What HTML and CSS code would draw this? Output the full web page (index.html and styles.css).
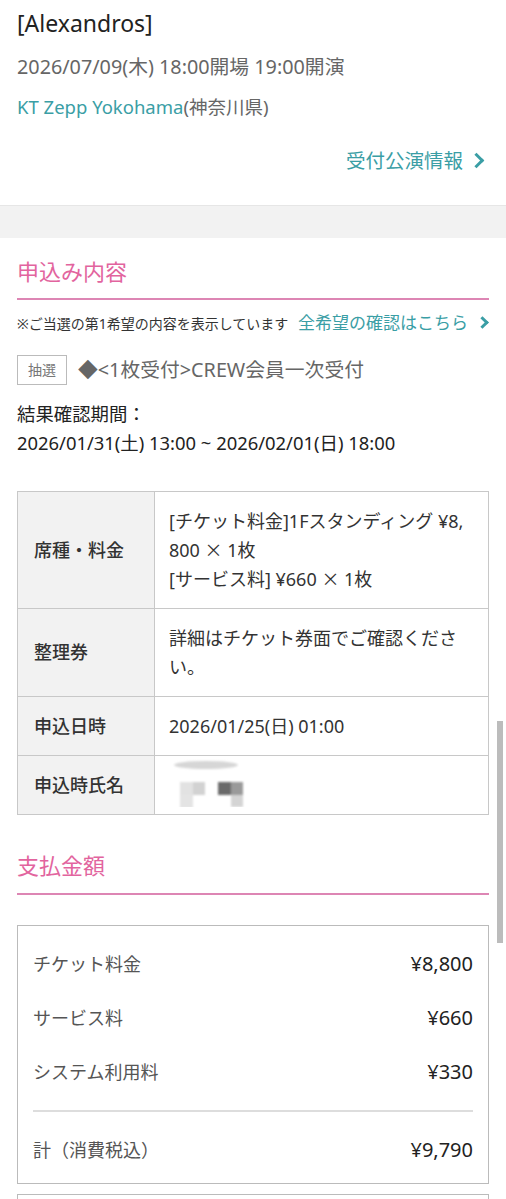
FILE: index.html
```html
<!DOCTYPE html>
<html lang="ja">
<head>
  <meta charset="UTF-8">
  <meta name="viewport" content="width=device-width, initial-scale=1.0">
  <title>申込み内容</title>
  <link rel="stylesheet" href="styles.css">
</head>
<body>
  <div class="event">
    <p class="artist">[Alexandros]</p>
    <p class="date">2026/07/09(木) 18:00開場 19:00開演</p>
    <p class="venue"><a href="#">KT Zepp Yokohama</a>(神奈川県)</p>
    <div class="more"><a href="#" class="link">受付公演情報<span class="chev"></span></a></div>
  </div>

  <div class="band"></div>

  <div class="section">
    <h2 class="heading">申込み内容</h2>
    <p class="note">※ご当選の第1希望の内容を表示しています <a href="#" class="link">全希望の確認はこちら<span class="chev small"></span></a></p>
    <div class="entry">
      <span class="badge">抽選</span>
      <span class="entry-name">◆&lt;1枚受付&gt;CREW会員一次受付</span>
    </div>
    <p class="period">結果確認期間：<br>2026/01/31(土) 13:00 ~ 2026/02/01(日) 18:00</p>

    <table class="detail">
      <tr>
        <th>席種・料金</th>
        <td>[チケット料金]1Fスタンディング ¥8,800 <span class="times">×</span> 1枚<br>[サービス料] ¥660 <span class="times">×</span> 1枚</td>
      </tr>
      <tr>
        <th>整理券</th>
        <td>詳細はチケット券面でご確認ください。</td>
      </tr>
      <tr>
        <th>申込日時</th>
        <td>2026/01/25(日) 01:00</td>
      </tr>
      <tr>
        <th>申込時氏名</th>
        <td>
          <svg class="masked" width="90" height="48" viewBox="0 0 90 48">
            <defs>
              <filter id="soft" x="-20%" y="-20%" width="140%" height="140%">
                <feGaussianBlur stdDeviation="1.2"/>
              </filter>
            </defs>
            <g filter="url(#soft)">
              <ellipse cx="35" cy="6" rx="32" ry="4" fill="#d6d6d6"/>
              <rect x="9" y="23" width="13" height="13" fill="#e2e2e2"/>
              <rect x="22" y="23" width="12" height="13" fill="#d2d2d2"/>
              <rect x="9" y="36" width="13" height="13" fill="#e4e4e4"/>
              <rect x="47" y="23" width="13" height="13" fill="#6a6a6a"/>
              <rect x="60" y="23" width="12" height="13" fill="#9a9a9a"/>
              <rect x="60" y="36" width="12" height="12" fill="#d4d4d4"/>
            </g>
          </svg>
        </td>
      </tr>
    </table>

    <h2 class="heading pay">支払金額</h2>
    <div class="summary">
      <div class="line"><span>チケット料金</span><span class="yen">¥8,800</span></div>
      <div class="line"><span>サービス料</span><span class="yen">¥660</span></div>
      <div class="line"><span>システム利用料</span><span class="yen">¥330</span></div>
      <div class="line total"><span>計（消費税込）</span><span class="yen">¥9,790</span></div>
    </div>
    <div class="summary next"></div>
  </div>

  <div class="scrollbar"></div>
</body>
</html>
```

FILE: styles.css
```css
body {
  margin: 0;
  font-family: "Noto Sans", "Noto Sans CJK JP", sans-serif;
  color: #333;
  background: #fff;
  overflow: hidden;
}
p {
  margin: 0;
}
a {
  text-decoration: none;
}
.link {
  color: #3a9ea5;
}
.chev {
  display: inline-block;
  width: 8px;
  height: 8px;
  border-top: 3px solid #3a9ea5;
  border-right: 3px solid #3a9ea5;
  transform: rotate(45deg);
  margin-left: 8px;
  vertical-align: 2px;
}
.chev.small {
  width: 6px;
  height: 6px;
  margin-left: 10px;
  vertical-align: 2px;
}

/* event summary */
.event {
  padding: 6px 17px 29px;
}
.artist {
  font-size: 23px;
  line-height: 34px;
  color: #222;
}
.date {
  margin-top: 12px;
  font-size: 19.8px;
  line-height: 30px;
  color: #666;
}
.venue {
  margin-top: 11px;
  font-size: 18.5px;
  line-height: 28px;
  color: #666;
}
.venue a {
  color: #3a9ea5;
}
.more {
  margin-top: 25px;
  text-align: right;
  padding-right: 7px;
  font-size: 19.5px;
  line-height: 30px;
}
.band {
  height: 32px;
  background: #f2f2f2;
  border-top: 1px solid #e6e6e6;
}

/* application details */
.section {
  padding: 0 17px;
}
.heading {
  margin: 0;
  padding: 17px 0 11px;
  font-size: 22px;
  line-height: 32px;
  font-weight: 400;
  color: #e2649e;
  border-bottom: 2px solid #dd86b4;
}
.note {
  margin-top: 10px;
  font-size: 14px;
  line-height: 26px;
  color: #333;
}
.note .link {
  margin-left: 6px;
  font-size: 17px;
}
.entry {
  display: flex;
  align-items: center;
  gap: 11px;
  margin-top: 17px;
}
.badge {
  box-sizing: border-box;
  width: 50px;
  height: 30px;
  border: 1px solid #bbb;
  font-size: 14px;
  line-height: 28px;
  text-align: center;
  color: #777;
}
.entry-name {
  font-size: 19.8px;
  line-height: 32px;
  color: #666;
}
.period {
  margin-top: 13px;
  font-size: 18.4px;
  line-height: 29px;
  color: #222;
}

.detail {
  width: 100%;
  margin-top: 34px;
  border-collapse: collapse;
  table-layout: fixed;
  font-size: 18px;
  line-height: 29px;
}
.detail th,
.detail td {
  border: 1.5px solid #c8c8c8;
  padding: 14.5px 20px 14.5px 14px;
  vertical-align: middle;
}
.detail th {
  width: 120px;
  padding: 14.5px 0 14.5px 16px;
  text-align: left;
  font-weight: 500;
  background: #f2f2f2;
  color: #333;
}
.detail td {
  color: #333;
  word-break: break-all;
}
.times {
  font-family: "Noto Sans CJK JP", sans-serif;
  line-height: 0;
}
.masked {
  display: block;
  margin: -12px 0 -8px 2px;
}

.heading.pay {
  margin-top: 14px;
  padding: 20px 0 12px;
}
.summary {
  margin-top: 30px;
  border: 1px solid #bbb;
  padding: 23px 15px 18px;
}
.line {
  display: flex;
  justify-content: space-between;
  align-items: baseline;
  font-size: 18px;
  line-height: 30px;
  color: #555;
}
.line + .line {
  margin-top: 24px;
}
.line .yen {
  font-size: 20px;
  color: #222;
}
.line.total {
  margin-top: 23px;
  padding-top: 23px;
  border-top: 2px solid #ddd;
}
.summary.next {
  margin-top: 10px;
  height: 40px;
  padding: 0;
}

.scrollbar {
  position: fixed;
  left: 497px;
  top: 721px;
  width: 6px;
  height: 222px;
  background: #bcbcbc;
}
```
